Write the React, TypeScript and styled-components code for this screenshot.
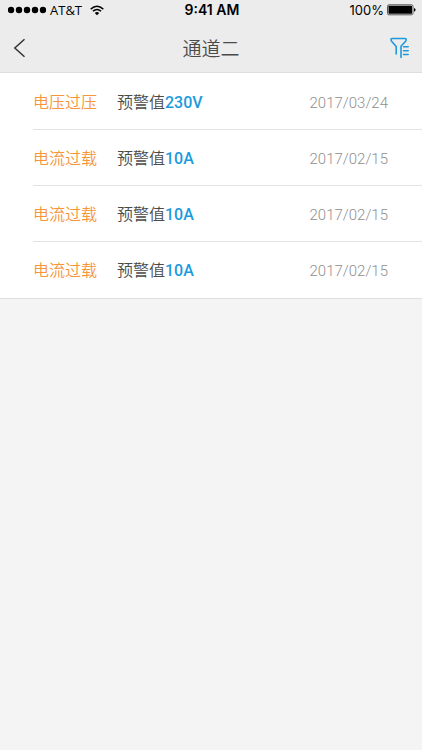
import React from "react";
import styled, { createGlobalStyle } from "styled-components";

const GlobalStyle = createGlobalStyle`
  *, *::before, *::after { box-sizing: border-box; }
  body {
    margin: 0;
    background: #f4f4f4;
    color: #4a4a4a;
    font-family: Roboto, "Noto Sans CJK SC", sans-serif;
  }
`;

const Page = styled.div`
  min-height: 100vh;
`;

const Top = styled.header`
  background: #ececec;
  border-bottom: 1px solid #dedede;
`;

const StatusBar = styled.div`
  display: grid;
  grid-template-columns: 1fr auto 1fr;
  align-items: center;
  height: 20px;
  padding: 0 6px 0 8px;
  color: #000;
  font-family: Inter, sans-serif;
  font-size: 13px;
  line-height: 20px;
`;

const Carrier = styled.div`
  display: flex;
  align-items: center;
  gap: 4px;
  font-family: "Open Sans", sans-serif;
`;

const Signal = styled.svg`
  flex: none;
`;

const Wifi = styled.svg`
  flex: none;
  margin-left: 4px;
`;

const Time = styled.time`
  font-size: 14px;
  font-weight: 600;
`;

const Battery = styled.div`
  display: flex;
  align-items: center;
  justify-content: flex-end;
  gap: 3px;
`;

const NavBar = styled.nav`
  display: grid;
  grid-template-columns: 44px 1fr 44px;
  align-items: center;
  height: 52px;
  padding-bottom: 1px;
`;

const Title = styled.h1`
  margin: 0;
  padding-top: 4px;
  text-align: center;
  font-size: 19px;
  line-height: 28px;
  font-weight: 350;
  font-family: "Noto Sans CJK SC", sans-serif;
`;

const IconButton = styled.button`
  display: flex;
  align-items: center;
  justify-content: center;
  width: 44px;
  height: 44px;
  margin: 0;
  padding: 4px 0 0;
  border: 0;
  background: none;
  cursor: pointer;
`;

const BackButton = styled(IconButton)`
  justify-content: flex-start;
  padding-left: 12px;
`;

const AlertList = styled.ul`
  margin: 0;
  padding: 1px 0 0 33px;
  list-style: none;
  background: #fff;
  border-bottom: 1px solid #dedede;
`;

const AlertRow = styled.li`
  display: flex;
  align-items: baseline;
  height: 56px;
  padding-right: 34px;
  font-size: 16px;
  line-height: 54px;
  border-bottom: 1px solid #e2e2e2;

  &:last-child {
    border-bottom: 0;
  }
`;

const Kind = styled.span`
  width: 84px;
  color: #f6953a;
  font-family: "Noto Sans CJK SC", sans-serif;
  font-weight: 350;
`;

const Threshold = styled.span`
  flex: 1;
  font-family: "Noto Sans CJK SC", sans-serif;
  font-weight: 350;
`;

const Value = styled.strong`
  color: #1c9bdc;
  font-family: Roboto, sans-serif;
  font-weight: 500;
`;

const AlertDate = styled.time`
  color: #8f8f8f;
  font-size: 15px;
  font-weight: 300;
`;

const alerts = [
  { kind: "电压过压", value: "230V", date: "2017/03/24" },
  { kind: "电流过载", value: "10A", date: "2017/02/15" },
  { kind: "电流过载", value: "10A", date: "2017/02/15" },
  { kind: "电流过载", value: "10A", date: "2017/02/15" },
];

const SignalIcon = () => (
  <Signal width="38" height="8" viewBox="0 0 38 8" aria-hidden="true">
    {[3, 11, 19, 27, 35].map((x) => (
      <circle key={x} cx={x} cy="4" r="3.2" />
    ))}
  </Signal>
);

const WifiIcon = () => (
  <Wifi width="14" height="11" viewBox="0 0 14 11" aria-hidden="true">
    <path d="M.7 4.1Q7-1.7 13.3 4.1M2.9 6.3Q7 2.7 11.1 6.3" fill="none" stroke="#000" strokeWidth="1.5" />
    <path d="M4.8 8Q7 6.2 9.2 8L7 10.2z" />
  </Wifi>
);

const BatteryIcon = () => (
  <svg width="29" height="12" viewBox="0 0 29 12" aria-hidden="true">
    <rect x=".5" y=".8" width="25.5" height="10" rx="1.5" fill="none" stroke="#555" />
    <rect x="1.5" y="1.8" width="23.5" height="8" rx=".5" />
    <path d="M27 3.9q1.6.5 1.6 1.9T27 7.7z" />
  </svg>
);

const BackIcon = () => (
  <svg width="14" height="20" viewBox="0 0 14 20" fill="none" stroke="#333" strokeWidth="1.5" aria-hidden="true">
    <path d="M12.5 1.2 2.8 10 12.5 18.8" />
  </svg>
);

const FilterIcon = () => (
  <svg width="20" height="22" viewBox="0 0 20 22" fill="none" stroke="#1c9bdc" strokeWidth="1.6" strokeLinecap="round" strokeLinejoin="round" aria-hidden="true">
    <path d="M6.2 17V9.5L1.4 4Q.2 1.5 2.4 1.5H14.6Q17 1.5 15.8 4L11 9.2V20.5" />
    <path d="M13.6 9.8h4.6M13.6 13.7h4.6M13.6 17.5h4.6" />
  </svg>
);

export default function App() {
  return (
    <Page>
      <GlobalStyle />
      <Top>
        <StatusBar>
          <Carrier>
            <SignalIcon />
            <span>AT&amp;T</span>
            <WifiIcon />
          </Carrier>
          <Time>9:41 AM</Time>
          <Battery>
            <span>100%</span>
            <BatteryIcon />
          </Battery>
        </StatusBar>
        <NavBar>
          <BackButton type="button" aria-label="返回">
            <BackIcon />
          </BackButton>
          <Title>通道二</Title>
          <IconButton type="button" aria-label="筛选">
            <FilterIcon />
          </IconButton>
        </NavBar>
      </Top>
      <main>
        <AlertList>
          {alerts.map((alert, index) => (
            <AlertRow key={index}>
              <Kind>{alert.kind}</Kind>
              <Threshold>
                预警值<Value>{alert.value}</Value>
              </Threshold>
              <AlertDate>{alert.date}</AlertDate>
            </AlertRow>
          ))}
        </AlertList>
      </main>
    </Page>
  );
}
